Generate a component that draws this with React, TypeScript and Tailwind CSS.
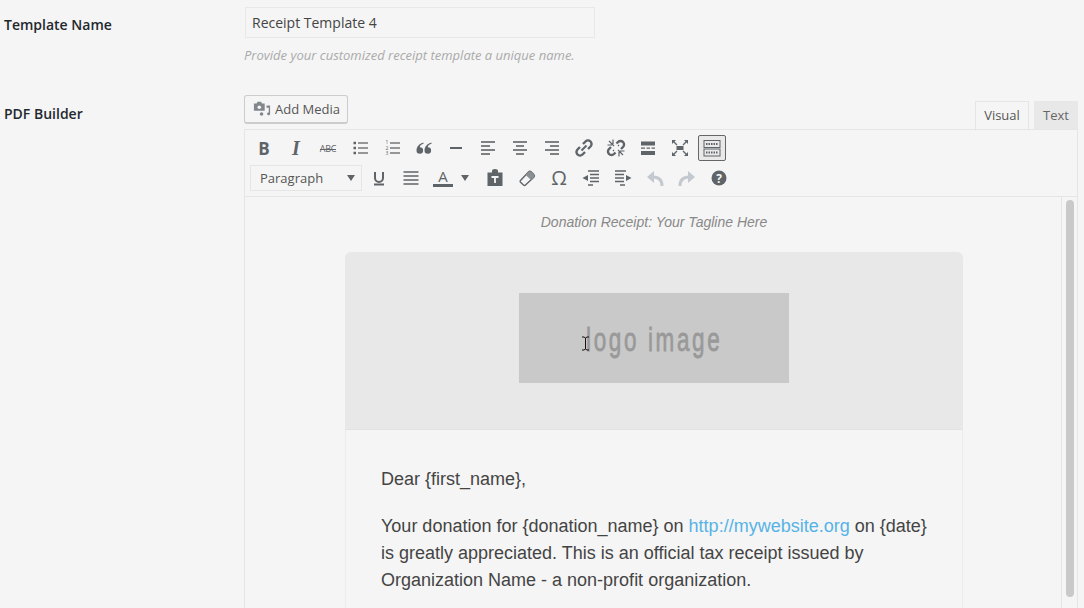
import type { ReactNode } from 'react';

const openSans = { fontFamily: '"Open Sans", sans-serif' };

function Ico({ children, w = 20, h = 20 }: { children: ReactNode; w?: number; h?: number }) {
  return (
    <svg width={w} height={h} viewBox={`0 0 ${w} ${h}`} fill="none" stroke="#5f6468" strokeWidth="2" className="block">
      {children}
    </svg>
  );
}

function Slot({ children, className = 'w-8' }: { children: ReactNode; className?: string }) {
  return <div className={`h-[30px] flex items-center justify-center shrink-0 ${className}`}>{children}</div>;
}

function Lines({ rows }: { rows: [number, number][] }) {
  return (
    <Ico>
      {rows.map(([x1, x2], i) => (
        <path key={i} d={`M${x1} ${4 + i * 4}H${x2}`} strokeWidth="1.6" />
      ))}
    </Ico>
  );
}

function Toolbar() {
  return (
    <div className="pl-[3px] pt-[3px] h-[67px] border-b border-[#e5e5e5]">
      <div className="flex h-[30px]">
        <Slot><span className="text-[17px] font-bold text-[#5f6468] leading-none" style={openSans}>B</span></Slot>
        <Slot><span className="text-[20px] font-bold italic text-[#5f6468] leading-none" style={{ fontFamily: '"Liberation Serif", serif' }}>I</span></Slot>
        <Slot>
          <span className="relative text-[9px] tracking-[-0.2px] text-[#5f6468] leading-none" style={openSans}>
            ABC
            <span className="absolute left-0 right-0 top-[5px] h-px bg-[#5f6468]" />
          </span>
        </Slot>
        <Slot>
          <Ico>
            <path d="M8 5H18M8 10H18M8 15H18" strokeWidth="1.3" stroke="#777" />
            <path d="M3.5 5h2.5M3.5 10h2.5M3.5 15h2.5" strokeWidth="2.5" />
          </Ico>
        </Slot>
        <Slot>
          <Ico>
            <path d="M8 5H18M8 10H18M8 15H18" strokeWidth="1.3" stroke="#777" />
            <text x="3.5" y="6" fontSize="5" fill="#5f6468" stroke="none">1</text>
            <text x="3.5" y="11.500" fontSize="5" fill="#5f6468" stroke="none">2</text>
            <text x="3.5" y="17" fontSize="5" fill="#5f6468" stroke="none">3</text>
          </Ico>
        </Slot>
        <Slot>
          <Ico>
            <path d="M9.500 4.500C6 5.500 2.500 8 2.500 12.500a3.300 3.300 0 1 0 3.300-3.300c0-1.700 1.700-3 3.700-3.500zM17.500 4.500c-3.500 1-7 3.500-7 8a3.300 3.300 0 1 0 3.300-3.300c0-1.700 1.700-3 3.700-3.500z" fill="#5f6468" stroke="none" />
          </Ico>
        </Slot>
        <Slot><Ico><path d="M4 10H16" /></Ico></Slot>
        <Slot><Lines rows={[[3, 17], [3, 12], [3, 17], [3, 12]]} /></Slot>
        <Slot><Lines rows={[[3, 17], [6, 14], [3, 17], [6, 14]]} /></Slot>
        <Slot><Lines rows={[[3, 17], [8, 17], [3, 17], [8, 17]]} /></Slot>
        <Slot>
          <Ico>
            <path d="M7.500 12.500l5-5" />
            <path d="M9 6l2.500-2.500a3.500 3.500 0 0 1 5 5L14 11M11 14l-2.500 2.500a3.500 3.500 0 0 1-5-5L6 9" strokeWidth="2.400" />
          </Ico>
        </Slot>
        <Slot>
          <Ico>
            <path d="M10.500 5.500l1.500-1.500a3.500 3.500 0 0 1 5 5l-2 2M9.500 14.500L8 16a3.500 3.500 0 0 1-5-5l2-2" strokeWidth="2.400" />
            <path d="M3 3l5 5M7 1.500V6M1.500 7H6M17 17l-5-5M13 18.500V14M18.500 13H14M12 8l1-1M8 12l-1 1" strokeWidth="1.200" />
          </Ico>
        </Slot>
        <Slot>
          <Ico>
            <path d="M3 5.500H17M3 15H17" strokeWidth="4" />
            <path d="M3 10.200H7M8.500 10.200H12M13.500 10.200H17" strokeWidth="1.300" />
          </Ico>
        </Slot>
        <Slot>
          <Ico>
            <rect x="6.500" y="8" width="7" height="4" fill="#5f6468" stroke="none" />
            <path d="M3 3l4 4M17 3l-4 4M3 17l4-4M17 17l-4-4" strokeWidth="1.300" />
            <path d="M2 6V2h4L2 6zM18 6V2h-4l4 4zM2 14v4h4l-4-4zM18 14v4h-4l4-4z" fill="#5f6468" stroke="none" />
          </Ico>
        </Slot>
        <Slot>
          <div className="w-7 h-[26px] flex items-center justify-center rounded-[2px] border border-[#666] bg-[#e9e9e9]">
            <Ico w={18} h={18}>
              <rect x="1" y="1.500" width="16" height="7" strokeWidth="1" />
              <rect x="1" y="10" width="16" height="7" strokeWidth="1" />
              <path d="M3 5h12M3 13.500h12" strokeWidth="2" strokeDasharray="1.500 1" />
            </Ico>
          </div>
        </Slot>
      </div>
      <div className="flex h-[30px] items-center">
        <div className="ml-[2px] mr-px w-28 h-[26px] border border-[#e5e5e5] flex items-center justify-between pl-[9px] pr-[6px] text-[13px] text-[#555] shrink-0" style={openSans}>
          <span className="pt-px">Paragraph</span>
          <span className="w-0 h-0 border-x-[4px] border-x-transparent border-t-[6px] border-t-[#5f6468]" />
        </div>
        <Slot>
          <Ico>
            <path d="M6 4v6a4 4 0 0 0 8 0V4" />
            <path d="M5 16.500H15" />
          </Ico>
        </Slot>
        <Slot>
          <Ico>
            <path d="M2.500 4H17.500M2.500 8H17.500M2.500 12H17.500M2.500 16H17.500" strokeWidth="1.700" />
          </Ico>
        </Slot>
        <Slot className="w-[52px] justify-start pl-[6px] gap-[6px]">
          <div className="flex flex-col items-center w-5">
            <span className="text-[15px] leading-[15px] text-[#5f6468]" style={openSans}>A</span>
            <span className="w-5 h-[3px] bg-[#5f6468]" />
          </div>
          <span className="ml-[2px] w-0 h-0 border-x-[4px] border-x-transparent border-t-[6px] border-t-[#5f6468]" />
        </Slot>
        <Slot>
          <Ico>
            <path d="M2.500 4.500h4.500V3a3 2 0 0 1 6 0v1.500h4.500V18h-15z" fill="#5f6468" stroke="none" />
            <path d="M6.500 9h7M10 9v6" stroke="#f5f5f5" strokeWidth="1.800" />
          </Ico>
        </Slot>
        <Slot>
          <Ico>
            <path d="M3.500 12.500L11.500 4a2 2 0 0 1 2.800 0l2.500 2.500a2 2 0 0 1 0 2.800L8.500 17a1.500 1.500 0 0 1-2 0l-3-2.800a1.200 1.200 0 0 1 0-1.700z" strokeWidth="1.400" />
            <path d="M11.500 4a2 2 0 0 1 2.800 0l2.500 2.500a2 2 0 0 1 0 2.800L14 12l-5.300-5z" fill="#8b9094" stroke="none" />
          </Ico>
        </Slot>
        <Slot><span className="text-[20px] leading-none text-[#5f6468]" style={openSans}>Ω</span></Slot>
        <Slot>
          <Ico>
            <path d="M7 3H18M9 6.500H18M9 10H18M9 13.500H18M7 17H12" strokeWidth="1.500" />
            <path d="M7 7v6L1.500 10z" fill="#5f6468" stroke="none" />
          </Ico>
        </Slot>
        <Slot>
          <Ico>
            <path d="M2 3H13M2 6.500H11M2 10H11M2 13.500H11M7 17H12" strokeWidth="1.500" />
            <path d="M13 7v6l5.500-3z" fill="#5f6468" stroke="none" />
          </Ico>
        </Slot>
        <Slot>
          <Ico>
            <path d="M17 18c0-6-3-9-9-9" stroke="#c3c9cf" strokeWidth="3" />
            <path d="M9 3v12L2 9z" fill="#c3c9cf" stroke="none" />
          </Ico>
        </Slot>
        <Slot>
          <Ico>
            <path d="M3 18c0-6 3-9 9-9" stroke="#c3c9cf" strokeWidth="3" />
            <path d="M11 3v12l7-6z" fill="#c3c9cf" stroke="none" />
          </Ico>
        </Slot>
        <Slot>
          <Ico>
            <circle cx="10" cy="10" r="7.500" fill="#5f6468" stroke="none" />
            <text x="10" y="14.500" fontSize="12" fontWeight="700" textAnchor="middle" fill="#f5f5f5" stroke="none" style={openSans}>?</text>
          </Ico>
        </Slot>
      </div>
    </div>
  );
}

function ReceiptCard() {
  return (
    <div className="w-[618px] mx-auto mt-[21px] rounded-t-[6px] border-x border-[#ececec]" style={{ fontFamily: '"Liberation Sans", sans-serif' }}>
      <div className="h-[178px] bg-[#e8e8e8] rounded-t-[6px] flex justify-center pt-[41px] border-b border-[#e2e2e2] -mx-px">
        <div className="relative w-[270px] h-[90px] bg-[#c9c9c9] flex items-center justify-center pt-[2px]">
          <span className="text-[34px] tracking-[4px] text-[#999] font-normal whitespace-nowrap scale-x-[0.66] [-webkit-text-stroke:0.8px_#999]">
            logo image
          </span>
          {/* text cursor over the logo */}
          <svg width="9" height="15" viewBox="0 0 9 15" className="absolute left-[62px] top-[43px]">
            <path d="M1 1h2l1.500 1L6 1h2M4.500 2v11M1 14h2l1.500-1L6 14h2" stroke="#111" strokeWidth="1" fill="none" />
          </svg>
        </div>
      </div>
      <div className="px-[35px] pt-[36px] pb-10 text-[18px] leading-[27px] text-[#444]">
        <p>Dear {'{first_name}'},</p>
        <p className="mt-5">
          Your donation for {'{donation_name}'} on <a className="text-[#55b3e6]">http://mywebsite.org</a> on {'{date}'} is greatly appreciated. This is an official tax receipt issued by Organization Name - a non-profit organization.
        </p>
      </div>
    </div>
  );
}

export default function App() {
  return (
    <div className="h-[608px] w-[1084px] overflow-hidden bg-[#f5f5f5] flex" style={openSans}>
      <div className="w-[244px] shrink-0 pl-1 text-sm font-semibold text-[#23282d]">
        <div className="mt-[15px] leading-5">Template Name</div>
        <div className="mt-[69px] leading-5">PDF Builder</div>
      </div>

      <div className="w-[834px] shrink-0">
        <div className="ml-px mt-[7px] w-[350px] h-[31px] border border-[#e8e8e8] px-[6px] text-sm leading-[29px] text-[#444]">
          Receipt Template 4
        </div>
        <p className="mt-[7px] text-[13px] leading-5 italic text-[#aaa]">Provide your customized receipt template a unique name.</p>

        <div className="mt-[30px] h-[34px] flex justify-between items-start">
          <button className="w-[104px] h-[29px] flex items-center pl-2 gap-1 rounded-[3px] border border-[#ccc] border-b-2 text-[13px] text-[#555]">
            <svg width="18" height="18" viewBox="0 0 20 18" className="block">
              <path d="M1 3h3l1-2h4l1 2h3v8H1z" fill="#82878c" />
              <circle cx="7" cy="7" r="2" fill="#f5f5f5" />
              <path d="M15 5h4v9.500a1.700 1.500 0 1 1-1.500-1.500V7.500H15z" fill="#82878c" />
              <circle cx="9.500" cy="14.500" r="2" fill="#82878c" />
            </svg>
            <span className="pt-px">Add Media</span>
          </button>
          <div className="flex gap-[5px] h-[29px] mt-[6px] relative z-10">
            <div className="w-[54px] h-[30px] border border-[#e5e5e5] border-b-[#f5f5f5] text-[13px] leading-[26px] text-center text-[#555]">Visual</div>
            <div className="w-[44px] h-[28px] bg-[#e8e8e8] text-[13px] leading-7 text-center text-[#666]">Text</div>
          </div>
        </div>

        <div className="border border-[#e5e5e5] h-[520px]">
          <Toolbar />
          <div className="flex h-[450px]">
            <div className="flex-1 pt-4 pl-[2px]">
              <div className="text-center italic text-sm leading-[18px] text-[#888]" style={{ fontFamily: '"Liberation Sans", sans-serif' }}>
                Donation Receipt: Your Tagline Here
              </div>
              <ReceiptCard />
            </div>
            <div className="w-4 border-l border-[#e5e5e5] flex justify-center pt-[3px] shrink-0">
              <div className="w-2 h-[397px] rounded-full bg-[#c9c9c9]" />
            </div>
          </div>
        </div>
      </div>
    </div>
  );
}
